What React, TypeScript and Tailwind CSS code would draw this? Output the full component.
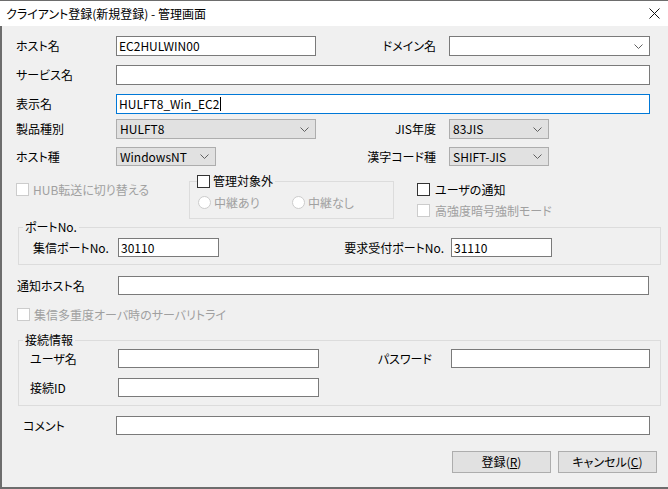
import React from 'react';

const Chevron: React.FC = () => (
  <svg width="9" height="5" viewBox="0 0 9 5" className="shrink-0">
    <path d="M0.5 0.5L4.5 4.5L8.5 0.5" fill="none" stroke="#606060" strokeWidth="1" />
  </svg>
);

const TextBox: React.FC<{ className: string; value?: string; focused?: boolean }> = ({ className, value, focused }) => (
  <div
    className={`${className} flex items-center bg-white pl-[2px] border ${
      focused ? 'border-[#0078d7]' : 'border-[#7a7a7a]'
    }`}
  >
    <span className="whitespace-nowrap">{value}</span>
    {focused && <span className="ml-[1px] w-[1px] h-[14px] bg-black" />}
  </div>
);

const Combo: React.FC<{ className: string; value?: string; editable?: boolean }> = ({ className, value, editable }) => (
  <div
    className={`${className} flex items-center justify-between pl-[3px] pr-[6px] border ${
      editable ? 'bg-white border-[#7a7a7a]' : 'bg-[#e1e1e1] border-[#adadad]'
    }`}
  >
    <span className="whitespace-nowrap">{value}</span>
    <Chevron />
  </div>
);

const CheckBox: React.FC<{ label: string; disabled?: boolean; gap?: string }> = ({ label, disabled, gap = 'ml-[4px]' }) => (
  <div className="flex items-center h-[13px]">
    <span
      className={`w-[13px] h-[13px] shrink-0 bg-white border ${disabled ? 'border-[#cccccc]' : 'border-[#333333]'}`}
    />
    <span className={`${gap} whitespace-nowrap ${disabled ? 'text-[#a0a0a0]' : 'text-black'}`}>{label}</span>
  </div>
);

const Radio: React.FC<{ label: string; className: string }> = ({ label, className }) => (
  <div className={`${className} flex items-center h-[13px]`}>
    <span className="w-[13px] h-[13px] shrink-0 rounded-full bg-white border border-[#cccccc]" />
    <span className="ml-[3px] whitespace-nowrap text-[#a0a0a0]">{label}</span>
  </div>
);

const Button: React.FC<{ text: string; hot: string }> = ({ text, hot }) => (
  <button className="w-[99px] h-[22px] bg-[#e1e1e1] border border-[#adadad] flex items-center justify-center">
    <span>
      {text}(<span className="underline">{hot}</span>)
    </span>
  </button>
);

export default function App() {
  return (
    <div className="w-[668px] h-[489px] flex flex-col overflow-hidden text-[12px] leading-[16px] text-black font-['Noto_Sans_CJK_JP','Noto_Sans',sans-serif] [font-feature-settings:'palt']">
      {/* title bar */}
      <div className="h-[26px] shrink-0 bg-white border-t border-[#6d6d6d] flex items-center justify-between pl-[6px] pr-[8px]">
        <span>クライアント登録(新規登録) - 管理画面</span>
        <svg width="11" height="11" viewBox="0 0 11 11">
          <path d="M0.5 0.5L10.5 10.5M10.5 0.5L0.5 10.5" stroke="#111" strokeWidth="1" />
        </svg>
      </div>

      {/* body */}
      <div className="flex-1 flex flex-col bg-[#f0f0f0] border-l-2 border-b-2 border-[#6d6d6d]">
        <div className="flex items-center h-[20px] mt-[10px] pl-[14px]">
          <div className="w-[100px]">ホスト名</div>
          <TextBox className="w-[200px] h-[20px]" value="EC2HULWIN00" />
          <div className="w-[120px] text-right">ドメイン名</div>
          <Combo className="ml-[13px] w-[201px] h-[20px]" editable />
        </div>

        <div className="flex items-center h-[20px] mt-[9px] pl-[14px]">
          <div className="w-[100px]">サービス名</div>
          <TextBox className="w-[534px] h-[20px]" />
        </div>

        <div className="flex items-center h-[20px] mt-[9px] pl-[14px]">
          <div className="w-[100px]">表示名</div>
          <TextBox className="w-[534px] h-[20px]" value="HULFT8_Win_EC2" focused />
        </div>

        <div className="flex items-center h-[20px] mt-[5px] pl-[14px]">
          <div className="w-[100px]">製品種別</div>
          <Combo className="w-[200px] h-[20px]" value="HULFT8" />
          <div className="w-[120px] text-right">JIS年度</div>
          <Combo className="ml-[13px] w-[100px] h-[20px]" value="83JIS" />
        </div>

        <div className="flex items-center h-[19px] mt-[8px] pl-[14px]">
          <div className="w-[100px]">ホスト種</div>
          <Combo className="w-[100px] h-[19px]" value="WindowsNT" />
          <div className="w-[220px] text-right">漢字コード種</div>
          <Combo className="ml-[13px] w-[100px] h-[19px]" value="SHIFT-JIS" />
        </div>

        <div className="flex h-[46px] mt-[7px]">
          <div className="w-[187px] pl-[14px] pt-[10px]">
            <CheckBox label="HUB転送に切り替える" disabled />
          </div>
          <fieldset className="w-[205px] h-[46px] border border-[#dcdcdc]">
            <legend className="ml-[7px] pr-[2px] h-[16px] flex items-center">
              <span className="w-[13px] h-[13px] bg-white border border-[#333333]" />
              <span className="ml-[3px]">管理対象外</span>
            </legend>
            <div className="flex mt-[7px] ml-[8px]">
              <Radio className="w-[94px]" label="中継あり" />
              <Radio className="w-[90px]" label="中継なし" />
            </div>
          </fieldset>
          <div className="pl-[23px] pt-[10px] flex flex-col gap-[8px]">
            <CheckBox label="ユーザの通知" gap="ml-[5px]" />
            <CheckBox label="高強度暗号強制モード" disabled gap="ml-[5px]" />
          </div>
        </div>

        <fieldset className="ml-[16px] w-[643px] h-[46px] border border-[#dcdcdc]">
          <legend className="ml-[4px] px-[2px] leading-[16px]">ポートNo.</legend>
          <div className="flex items-center h-[19px] mt-[3px]">
            <div className="w-[99px] pl-[14px]">集信ポートNo.</div>
            <TextBox className="w-[101px] h-[19px]" value="30110" />
            <div className="w-[225px] text-right">要求受付ポートNo.</div>
            <TextBox className="ml-[7px] w-[101px] h-[19px]" value="31110" />
          </div>
        </fieldset>

        <div className="flex items-center h-[19px] mt-[11px] pl-[15px]">
          <div className="w-[101px]">通知ホスト名</div>
          <TextBox className="w-[531px] h-[19px]" />
        </div>

        <div className="mt-[13px] pl-[15px]">
          <CheckBox label="集信多重度オーバ時のサーバリトライ" disabled />
        </div>

        <fieldset className="mt-[11px] ml-[16px] w-[643px] h-[74px] border border-[#dcdcdc]">
          <legend className="ml-[4px] px-[2px] leading-[16px]">接続情報</legend>
          <div className="flex items-center h-[19px] mt-[1px]">
            <div className="w-[99px] pl-[11px]">ユーザ名</div>
            <TextBox className="w-[201px] h-[19px]" />
            <div className="w-[113px] text-right">パスワード</div>
            <TextBox className="ml-[19px] w-[199px] h-[19px]" />
          </div>
          <div className="flex items-center h-[19px] mt-[10px]">
            <div className="w-[99px] pl-[11px]">接続ID</div>
            <TextBox className="w-[201px] h-[19px]" />
          </div>
        </fieldset>

        <div className="flex items-center h-[19px] mt-[10px] pl-[21px]">
          <div className="w-[93px]">コメント</div>
          <TextBox className="w-[534px] h-[19px]" />
        </div>

        <div className="flex h-[22px] mt-[16px] pl-[450px] gap-[7px]">
          <Button text="登録" hot="R" />
          <Button text="キャンセル" hot="C" />
        </div>
      </div>
    </div>
  );
}
